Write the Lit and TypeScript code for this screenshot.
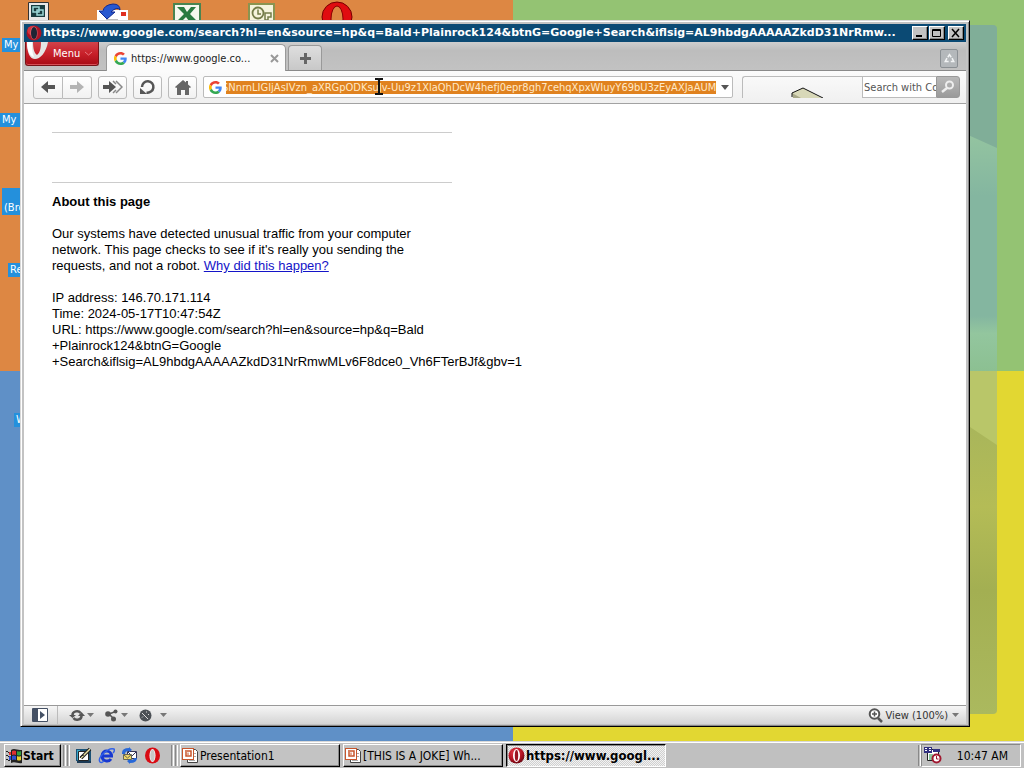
import { LitElement, html, svg, css } from "lit";
import { customElement, query } from "lit/decorators.js";

const googleG = html`<svg width="13" height="13" viewBox="0 0 48 48" aria-hidden="true">
  <path fill="#ea4335" d="M24 9.5c3.500 0 6.700 1.200 9.200 3.600l6.900-6.900C35.900 2.400 30.500 0 24 0 14.600 0 6.500 5.400 2.600 13.200l8 6.200C12.400 13.700 17.700 9.500 24 9.500z"/>
  <path fill="#4285f4" d="M47 24.500c0-1.600-.2-3.100-.4-4.500H24v9h12.900c-.6 3-2.300 5.500-4.800 7.200l7.700 6C44.400 38 47 31.800 47 24.500z"/>
  <path fill="#fbbc05" d="M10.500 28.600a14.500 14.500 0 0 1 0-9.200l-8-6.200a24 24 0 0 0 0 21.600z"/>
  <path fill="#34a853" d="M24 48c6.500 0 11.900-2.100 15.900-5.800l-7.700-6c-2.200 1.500-4.900 2.300-8.200 2.300-6.300 0-11.600-4.200-13.500-9.900l-8 6.200C6.500 42.600 14.600 48 24 48z"/>
</svg>`;

const operaBadge = html`<svg width="17" height="17" viewBox="0 0 17 17" aria-hidden="true">
  <defs><radialGradient id="ob" cx=".4" cy=".3" r=".8"><stop offset="0" stop-color="#e8404c"/><stop offset=".6" stop-color="#b01020"/><stop offset="1" stop-color="#50040c"/></radialGradient></defs>
  <circle cx="8.500" cy="8.500" r="8" fill="url(#ob)"/>
  <ellipse cx="8.500" cy="8.500" rx="3.500" ry="6.500" fill="#fff"/><ellipse cx="8.500" cy="8.500" rx="1.700" ry="5.500" fill="#9c1422"/>
</svg>`;

const operaTitle = html`<svg width="16" height="16" viewBox="0 0 17 17" aria-hidden="true">
  <circle cx="8.500" cy="8.500" r="8" fill="#a81424"/><circle cx="6.500" cy="6" r="5" fill="#d43440"/>
  <ellipse cx="8.500" cy="8.500" rx="4" ry="7" fill="#fff" opacity=".25"/><ellipse cx="8.500" cy="8.500" rx="3.200" ry="6.500" fill="#1c2434"/>
</svg>`;

const powerpoint = html`<svg width="17" height="17" viewBox="0 0 17 17" aria-hidden="true">
  <path fill="#fff" stroke="#444" d="M5.500 2.500h8l2 2v11h-10z"/><path stroke="#aaa" d="M12 6.500h2M12 9.500h2M7 13.500h6"/>
  <rect x=".5" y="1.500" width="11" height="11" fill="#fff" stroke="#c8562c"/>
  <path fill="none" stroke="#c8562c" stroke-width="1.500" d="M3 4h6v5H4V5"/><path fill="none" stroke="#c8562c" d="M6 5.500v2.500"/>
</svg>`;

const caret = html`<svg class="caret" width="7" height="4" viewBox="0 0 7 4" aria-hidden="true"><path fill="#777" d="M0 0h7L3.500 4z"/></svg>`;

const arrowLeft = svg`<path d="M1 7l7-6v4h7v4H8v4z"/>`;

@customElement("app-taskbar")
class AppTaskbar extends LitElement {
  static styles = css`
    :host { display: block; background: #c0c0c0; border-top: 1px solid #d8d8d8; font: 12px "DejaVu Sans Condensed", "DejaVu Sans", sans-serif; color: #000; }
    .bar { display: flex; align-items: center; height: 26px; padding: 1px 3px 1px 4px; box-sizing: border-box; border-top: 1px solid #fff; }
    button { font: inherit; color: inherit; background: #c3c3c3; padding: 0; margin: 0; border: 1px solid; border-color: #fff #000 #000 #fff; box-shadow: inset -1px -1px #888; height: 23px; display: flex; align-items: center; white-space: nowrap; overflow: hidden; box-sizing: border-box; border-radius: 0; }
    .start { width: 57px; font-weight: bold; padding-left: 1px; gap: 1px; flex: none; }
    .grip { width: 1px; height: 21px; border-left: 1px solid #888; border-right: 1px solid #fff; margin-left: 2px; flex: none; }
    .grip.second { margin-left: 1px; }
    .quick { display: flex; gap: 6px; padding: 0 8px 0 5px; }
    .quick button { border: 0; box-shadow: none; background: none; width: 17px; }
    .tasks { display: flex; gap: 3px; flex: 1; padding-left: 2px; min-width: 0; }
    .task { flex: 0 1 160px; padding-left: 1px; gap: 1px; min-width: 0; }
    .task span { overflow: hidden; }
    .task svg, .start svg { flex: none; }
    .task.active { font-size: 13px; font-weight: bold; background: repeating-conic-gradient(#d0d0d0 0 25%, #f2f2f2 0 50%) 0 0 / 2px 2px; border-color: #000 #fff #fff #000; box-shadow: inset 1px 1px #888; }
    .tray { display: flex; align-items: center; height: 23px; width: 100px; box-sizing: border-box; border: 1px solid; border-color: #888 #fff #fff #888; padding: 0 12px 0 2px; justify-content: space-between; }
  `;
  render() {
    return html`<nav class="bar" aria-label="Taskbar">
      <button class="start"><svg width="16" height="16" viewBox="0 0 16 16" aria-hidden="true">
        <path fill="#222" d="M0 3h2v1H0zm2 1h2v1H2zM0 7h2v1H0zm2 1h2v1H2zM0 11h2v1H0zm2 1h2v1H2zM5 2c3-2 6 0 9 0h2v13c-4 1-7-2-11 0z"/>
        <path fill="#e03030" d="M6 3q2-1 4 0v4q-2-1-4 0zM3 4h2v3H3z"/><path fill="#30a040" d="M11 3q2 1 4 0v4q-2 1-4 0z"/><path fill="#3050d0" d="M6 8q2-1 4 0v4q-2-1-4 0zM3 8h2v4H3z"/><path fill="#e8d030" d="M11 8q2 1 4 0v4q-2 1-4 0z"/>
      </svg>Start</button>
      <i class="grip"></i><i class="grip second"></i>
      <div class="quick">
        <button aria-label="Show Desktop"><svg width="17" height="17" viewBox="0 0 17 17"><path fill="#1b5276" d="M1 2h15v12H1z"/><path fill="#38a8c8" d="M2 3h3v10H2z"/><path fill="#fff" stroke="#222" d="M3.500 4.500h10v9h-10z"/><path stroke="#222" stroke-width="3.500" d="M6 11l9-9"/><path stroke="#e8e0a0" stroke-width="1.500" d="M6 11l9-9"/><path fill="none" stroke="#222" d="M5 11q1-3 4-3"/><path fill="#1b3a56" d="M2 14h14v2H2z"/></svg></button>
        <button aria-label="Internet Explorer"><svg width="17" height="17" viewBox="0 0 17 17"><path fill="none" stroke="#1838d0" stroke-width="3" d="M4 9h9.500c0-6-9-7-9.500 0 0 6 7 6 9 3"/><path fill="none" stroke="#3060e8" stroke-width="1.500" d="M2 15C-1 11 10 0 16 2c1 1 0 3-1 4M2 15c1 1 3 0 4-1"/></svg></button>
        <button aria-label="Outlook Express"><svg width="17" height="17" viewBox="0 0 17 17"><path fill="#fff" stroke="#335" d="M6.500 4.500h9v7h-9z"/><path fill="none" stroke="#335" d="M7 5l4 4 4-4"/><path fill="#f0d868" stroke="#665" d="M2.500 7.500h8v5h-8z"/><path fill="none" stroke="#665" d="M3 8l3.500 3L10 8"/><path fill="#2868d8" d="M1 6q0-5 7-5V0l3 3-3 2V4Q4 4 4 7H1zM16 11q0 5-7 5v1l-3-3 3-2v1q4 0 4-2z"/></svg></button>
        <button aria-label="Opera"><svg width="17" height="17" viewBox="0 0 17 17"><ellipse cx="8.500" cy="8.500" rx="7.500" ry="8" fill="#d80c14"/><ellipse cx="8.500" cy="8.500" rx="3" ry="6.500" fill="#fff"/><ellipse cx="8.500" cy="8.500" rx="2.300" ry="6" fill="#c8c8c8"/></svg></button>
      </div>
      <i class="grip"></i><i class="grip second"></i>
      <div class="tasks">
        <button class="task">${powerpoint}<span>Presentation1</span></button>
        <button class="task">${powerpoint}<span>[THIS IS A JOKE] Wh...</span></button>
        <button class="task active">${operaBadge}<span>https://www.googl...</span></button>
      </div>
      <i class="grip"></i>
      <div class="tray"><svg width="18" height="17" viewBox="0 0 18 17" aria-hidden="true"><path fill="#fff" stroke="#222" d="M3.500 2.500h11v11h-11z"/><path fill="#303080" d="M0 0h8v6H0zM9 2h7v3H9z"/><path stroke="#fff" d="M1 1.500h2M1 3.500h2M5 1.500h2M5 3.500h2"/><path fill="#8cc8a0" d="M5 7h4v6H5z"/><circle cx="12.500" cy="11.500" r="4" fill="#fff" stroke="#a01830" stroke-width="2"/><path fill="none" stroke="#a01830" d="M12.500 9v3h2"/></svg><time>10:47 AM</time></div>
    </nav>`;
  }
}

@customElement("app-browser")
class AppBrowser extends LitElement {
  @query(".url") url!: HTMLInputElement;

  static styles = css`
    :host { display: flex; flex-direction: column; box-sizing: border-box; background: #fff; border: 1px solid; border-color: #d8d8d8 #000 #000 #d8d8d8; box-shadow: inset 1px 1px #fff, inset -1px -1px #888, inset 0 0 0 3px #c3c3c3; padding: 3px 3px 2px; font: 11px "DejaVu Sans Condensed", "DejaVu Sans", sans-serif; color: #222; }
    button, input { font: inherit; color: inherit; margin: 0; padding: 0; box-sizing: border-box; }
    button { display: flex; align-items: center; justify-content: center; flex: none; }
    .title { display: flex; align-items: center; height: 18px; background: #0b4a74; color: #fff; padding: 0 2px; gap: 1px; flex: none; }
    .title h1 { font: bold 11px/18px "DejaVu Sans", sans-serif; margin: 0; flex: 1; white-space: nowrap; overflow: hidden; min-width: 0; }
    .title svg { flex: none; }
    .ctl { width: 16px; height: 14px; background: #c3c3c3; border: 1px solid; border-color: #fff #000 #000 #fff; box-shadow: inset -1px -1px #888; }
    .ctl.close { margin-left: 2px; }
    .tabs { display: flex; align-items: flex-end; height: 29px; background: linear-gradient(#cfcfcf, #bdbdbd 30%, #c2c2c2); border-bottom: 1px solid #8a8a8a; box-sizing: border-box; flex: none; }
    .menu { align-self: flex-start; height: 24px; width: 74px; margin-left: 1px; border: 1px solid #781418; border-top: 0; border-radius: 0 0 3px 3px; background: linear-gradient(#d0434a, #c8202a 50%, #a80c16); color: #fff; justify-content: flex-start; gap: 5px; font-size: 11px; box-shadow: inset 0 -1px #d85058; }
    .menu svg { align-self: flex-start; }
    .menu .chev { align-self: center; }
    .tab { display: flex; align-items: center; gap: 4px; width: 180px; height: 27px; margin: 0 0 -1px 7px; padding: 0 5px 0 7px; box-sizing: border-box; background: #fbfbfb; border: 1px solid #999; border-bottom: 0; border-radius: 5px 5px 0 0; flex: 0 1 auto; }
    .tab .name { flex: 1; white-space: nowrap; overflow: hidden; }
    .tab button { border: 0; background: none; width: 12px; height: 14px; }
    .new { width: 34px; height: 25px; margin-left: 2px; border: 1px solid #999; border-bottom: 0; border-radius: 4px 4px 0 0; background: linear-gradient(#dedede, #c8c8c8); }
    .trash { width: 18px; height: 19px; margin: 0 8px 2px auto; border: 1px solid #8b9094; background: #b4b8bb; border-radius: 2px; }
    .tools { display: flex; align-items: center; height: 33px; background: linear-gradient(#fbfbfb, #f0f0f0); border-bottom: 1px solid #a2a2a2; box-sizing: border-box; padding: 0 6px 0 9px; gap: 6px; flex: none; }
    .tools > button, .pair button { width: 29px; height: 23px; border: 1px solid #bbb; border-radius: 3px; background: linear-gradient(#fff, #f1f1f1); }
    .pair { display: flex; }
    .pair button:first-child { width: 30px; border-radius: 3px 0 0 3px; }
    .pair button:last-child { border-left: 0; border-radius: 0 3px 3px 0; }
    .address { position: relative; display: flex; align-items: center; flex: 1; height: 22px; border: 1px solid #bbb; border-radius: 2px; background: #fff; box-sizing: border-box; padding: 0 3px 0 5px; gap: 4px; min-width: 0; }
    .url { flex: 1; min-width: 0; height: 13px; border: 0; background: #e0821f; color: #ffe9c8; }
    .address button { border: 0; background: none; width: 8px; height: 18px; margin-left: 1px; }
    .beam { position: absolute; left: 170px; top: 1px; }
    .aside { display: flex; height: 22px; width: 218px; margin-left: 3px; flex: none; }
    .box { width: 120px; border: 1px solid #bbb; border-bottom: 0; border-right: 0; box-sizing: border-box; border-radius: 3px 0 0; display: flex; align-items: flex-end; justify-content: center; padding-left: 9px; flex: none; }
    .aside input { flex: 1; min-width: 0; border: 1px solid #bbb; border-right: 0; background: #fff; padding-left: 1px; color: #555; border-radius: 0; }
    .aside input::placeholder { color: #555; opacity: 1; }
    .go { width: 24px; border: 1px solid #999; border-radius: 0 3px 3px 0; background: linear-gradient(#b9b9b9, #9a9a9a); }
    main { flex: 1; min-height: 0; overflow: hidden; background: #fff; padding: 28px 28px 0; color: #000; font: 13px/16px "Liberation Sans", Arial, sans-serif; }
    .col { max-width: 400px; }
    hr { border: 0; border-top: 1px solid #ccc; margin: 0 0 49px; }
    hr.low { margin-bottom: 11px; }
    h2 { font-size: 13px; line-height: 16px; margin: 0 0 16px; }
    p { margin: 0 0 16px; white-space: nowrap; }
    a { color: #1414c8; }
    footer { display: flex; align-items: center; height: 19px; border-top: 1px solid #999; background: linear-gradient(#f6f6f6, #d4d4d4); box-sizing: border-box; padding: 0 7px; flex: none; }
    footer button { border: 0; background: none; gap: 2px; height: 18px; }
    .panelbtn { width: 17px; }
    .sep { width: 1px; height: 18px; background: #bbb; margin: 0 11px 0 9px; }
    .group { display: flex; gap: 11px; flex: 1; }
    .group button:last-child { gap: 8px; }
    .view { color: #333; }
    .view .caret { margin-left: 2px; }
  `;

  firstUpdated() {
    this.url.scrollLeft = this.url.scrollWidth;
  }

  render() {
    return html`
      <header class="title">${operaTitle}<h1>https://www.google.com/search?hl=en&source=hp&q=Bald+Plainrock124&btnG=Google+Search&iflsig=AL9hbdgAAAAAZkdD31NrRmw...</h1>
        <button class="ctl" aria-label="Minimize"><svg width="12" height="10"><path fill="#000" d="M2 7h6v2H2z"/></svg></button>
        <button class="ctl" aria-label="Maximize"><svg width="12" height="10"><path fill="none" stroke="#000" d="M1.500 1.500h8v7h-8zM1 2.500h9"/></svg></button>
        <button class="ctl close" aria-label="Close"><svg width="12" height="10"><path stroke="#000" stroke-width="1.500" d="M2 1l7 8M9 1L2 9"/></svg></button>
      </header>
      <div class="tabs">
        <button class="menu"><svg width="22" height="19" viewBox="0 0 22 19" aria-hidden="true"><path fill="#e4e4e4" d="M1 0c0 11 3 17 8 17S20 11 22 0h-7c0 6-1 11-4 13C8 11 7 6 7 0z"/><path fill="#fff" d="M1 0c0 9 3 14 7 15C6 11 6 5 6 0z"/></svg>Menu<svg class="chev" width="7" height="5" viewBox="0 0 7 5" aria-hidden="true"><path fill="none" stroke="#e87880" d="M0 1l3.500 3L7 1"/></svg></button>
        <div class="tab">${googleG}<span class="name">https://www.google.co...</span><button aria-label="Close tab"><svg width="9" height="9"><path stroke="#999" stroke-width="2" d="M1 1l7 7M8 1L1 8"/></svg></button></div>
        <button class="new" aria-label="New tab"><svg width="13" height="13"><path fill="#666" d="M5 1h3v4h4v3H8v4H5V8H1V5h4z"/></svg></button>
        <button class="trash" aria-label="Closed tabs"><svg width="11" height="11" viewBox="0 0 13 13"><path fill="none" stroke="#f2f4f5" stroke-width="1.800" d="M4.500 5L6.500 2l2 3M9.500 6l2 4H8M5.500 10h-4l2-4"/></svg></button>
      </div>
      <div class="tools">
        <div class="pair">
          <button aria-label="Back"><svg width="16" height="14" fill="#555">${arrowLeft}</svg></button>
          <button aria-label="Forward"><svg width="16" height="14" viewBox="0 0 16 14"><path fill="#b4b4b4" d="M15 7L8 1v4H1v4h7v4z"/></svg></button>
        </div>
        <button aria-label="Fast forward"><svg width="21" height="14" viewBox="0 0 21 14"><path fill="#555" d="M14 7L7 1v4H1v4h6v4z"/><path fill="none" stroke="#888" stroke-width="1.500" d="M11 1l3 3M14 1l6 6-6 6M11 13l3-3"/></svg></button>
        <button aria-label="Reload"><svg width="17" height="17" viewBox="0 0 17 17"><path fill="none" stroke="#555" stroke-width="2.500" d="M3 8a5.700 5.700 0 1 1 4.500 5.500"/><path fill="#555" d="M1 15V9l7 6z"/></svg></button>
        <button aria-label="Home"><svg width="16" height="15" viewBox="0 0 16 15"><path fill="#666" d="M8 0L0 7l1 1 1-.5V15h4v-5h4v5h4V7.500l1 .5 1-1-3-2.600V1h-2v1.600z"/></svg></button>
        <div class="address">${googleG}<input class="url" aria-label="Address" .value=${"SNnrnLIGIjAsIVzn_aXRGpODKsuJv-Uu9z1XlaQhDcW4hefj0epr8gh7cehqXpxWIuyY69bU3zEyAXJaAUM"}><button aria-label="Show addresses"><svg width="8" height="5"><path fill="#555" d="M0 0h8L4 5z"/></svg></button>
          <svg class="beam" width="10" height="17" viewBox="0 0 10 17" aria-hidden="true"><path fill="none" stroke="#111" stroke-width="2" d="M1 1h3l1 1 1-1h3M5 2v13M1 16h3l1-1 1 1h3"/></svg></div>
        <div class="aside">
          <div class="box"><svg width="33" height="11" viewBox="0 0 33 11" aria-hidden="true"><path fill="#d8d8b8" d="M1 6l11-5 19 10H3z"/><path fill="#a8a888" d="M1 6l9 5H2z"/><path fill="none" stroke="#111" d="M1 10V6l11-5 20 10"/></svg></div>
          <input aria-label="Search" placeholder="Search with Co"><button class="go" aria-label="Go"><svg width="16" height="14" viewBox="0 0 16 14"><circle cx="9.500" cy="5" r="3.500" fill="none" stroke="#eee" stroke-width="2"/><path stroke="#eee" stroke-width="2.500" d="M7 8l-5 4"/></svg></button>
        </div>
      </div>
      <main><div class="col">
        <hr><hr class="low">
        <h2>About this page</h2>
        <p>Our systems have detected unusual traffic from your computer<br>network. This page checks to see if it's really you sending the<br>requests, and not a robot. <a href="#why">Why did this happen?</a></p>
        <p>IP address: 146.70.171.114<br>Time: 2024-05-17T10:47:54Z<br>URL: https://www.google.com/search?hl=en&source=hp&q=Bald<br>+Plainrock124&btnG=Google<br>+Search&iflsig=AL9hbdgAAAAAZkdD31NrRmwMLv6F8dce0_Vh6FTerBJf&gbv=1</p>
      </div></main>
      <footer>
        <button class="panelbtn" aria-label="Panels"><svg width="16" height="14" viewBox="0 0 16 14"><path fill="#fff" stroke="#445064" d="M.5.5h15v13H.5z"/><path fill="#445064" d="M1 1h5v12H1zM8 3v8l5-4z"/></svg></button>
        <i class="sep"></i>
        <div class="group">
          <button aria-label="Synchronize"><svg width="16" height="13" viewBox="0 0 16 13"><path fill="none" stroke="#555" stroke-width="2.500" d="M3.500 6c0-4 6-5 8-2M12.500 7c0 4-6 5-8 2"/><path fill="#555" d="M0 6h7L3.500 9zM9 7h7l-3.500-4z"/></svg>${caret}</button>
          <button aria-label="Unite"><svg width="14" height="13" viewBox="0 0 14 13"><path fill="none" stroke="#555" stroke-width="1.500" d="M10.500 2.500L4 5l5 5"/><circle cx="3" cy="5" r="2.800" fill="#555"/><circle cx="10.500" cy="2.500" r="2" fill="#555"/><circle cx="8.500" cy="10" r="2.500" fill="#555"/></svg>${caret}</button>
          <button aria-label="Turbo"><svg width="13" height="13" viewBox="0 0 13 13"><circle cx="6.500" cy="6.500" r="6" fill="#4b5055"/><path fill="none" stroke="#ddd" d="M3 4l6 6M3 8.500l1-1M7 3h1M9 5l1 1"/></svg>${caret}</button>
        </div>
        <button class="view"><svg width="15" height="15" viewBox="0 0 15 15" aria-hidden="true"><circle cx="6.500" cy="6" r="4.800" fill="#fff" stroke="#555" stroke-width="2"/><path stroke="#555" stroke-width="2.500" d="M10 10l4 4"/><path stroke="#555" stroke-width="1.500" d="M4 6h5M6.500 3.500v5"/></svg>View (100%)${caret}</button>
      </footer>`;
  }
}

@customElement("app-root")
class AppRoot extends LitElement {
  static styles = css`
    :host { display: flex; flex-direction: column; height: 100vh; overflow: hidden; }
    .desktop { position: relative; flex: 1; min-height: 0; overflow: hidden; display: grid; grid-template: 371fr 370fr / 513fr 511fr; font: 11px/14px "DejaVu Sans Condensed", "DejaVu Sans", sans-serif; color: #fff; }
    .q1 { background: #dd8743; } .q2 { background: #94c373; } .q3 { background: #5f90c7; } .q4 { background: #e2d732; }
    .glass { position: absolute; right: 27px; top: 25px; bottom: 27px; width: 60px; border-radius: 4px; overflow: hidden; }
    .glass svg { display: block; width: 100%; height: 100%; }
    .shortcut { position: absolute; }
    .label { position: absolute; background: #2490dc; padding: 0 2px; white-space: nowrap; }
    .l1 { left: 2px; top: 38px; } .l2 { left: 0; top: 113px; } .l3 { left: 2px; top: 188px; padding-top: 13px; } .l4 { left: 8px; top: 263px; } .l5 { left: 14px; top: 413px; }
    .i1 { left: 28px; top: 2px; } .i2 { left: 96px; top: 2px; } .i3 { left: 173px; top: 3px; } .i4 { left: 248px; top: 3px; } .i5 { left: 321px; top: 1px; }
    app-browser { position: absolute; left: 20px; top: 20px; right: 54px; bottom: 14px; }
    app-taskbar { flex: none; }
  `;
  render() {
    return html`
      <div class="desktop">
        <div class="q1"></div><div class="q2"></div><div class="q3"></div><div class="q4"></div>
        <div class="glass"><svg viewBox="0 0 60 689" preserveAspectRatio="none" aria-hidden="true">
          <defs>
            <linearGradient id="up" x2="0" y2="1"><stop offset="0" stop-color="#97c7a0"/><stop offset=".3" stop-color="#84b6a0"/><stop offset=".78" stop-color="#84b6a0"/><stop offset=".85" stop-color="#93c69e"/><stop offset="1" stop-color="#8cc092"/></linearGradient>
            <linearGradient id="low" x2="0" y2="1"><stop offset="0" stop-color="#a6b45c"/><stop offset=".33" stop-color="#b4bc56"/><stop offset=".6" stop-color="#a3af52"/><stop offset="1" stop-color="#abb95e"/></linearGradient>
          </defs>
          <path fill="#80ae98" d="M0 0h60v130H0z"/><path fill="url(#up)" d="M0 96l60 27v223H0z"/>
          <path fill="#b9c669" d="M0 346h60v80H0z"/><path fill="url(#low)" d="M0 380l60 40v269H0z"/>
        </svg></div>
        <span class="label l1">My</span><span class="label l2">My D</span><span class="label l3">(Bro</span><span class="label l4">Re</span><span class="label l5">W</span>
        <svg class="shortcut i1" width="22" height="20"><path fill="#e8e8e8" stroke="#333" d="M.500.500h20v19H.500z"/><path fill="#183c40" d="M3 3h14v12H3z"/><path fill="none" stroke="#9cd8d8" stroke-width="1.500" d="M5 5h6v5H5zM9 8h6v5H9z"/></svg>
        <svg class="shortcut i2" width="34" height="20"><path fill="#fff" d="M1 8h31v12H1z"/><path fill="#e03020" d="M25 10h5v4h-5z"/><path stroke="#777" d="M10 18h12"/><path fill="#2858d0" stroke="#102890" d="M3 9h4Q8 3 17 2q7 0 7 6-3-4-9 2h4l-8 7z"/></svg>
        <svg class="shortcut i3" width="28" height="18"><path fill="#f6f8ee" stroke="#4a8450" stroke-width="2" d="M1 1h26v18H1z"/><path fill="#2b7b40" d="M4 4h7l3 5 4-5h5l-6 7 7 7h-8l-3-4-4 4H4l7-7z"/></svg>
        <svg class="shortcut i4" width="28" height="18"><path fill="#f6f4dc" stroke="#8a9450" stroke-width="2" d="M1 1h25v18H1z"/><circle cx="10" cy="10" r="5.500" fill="none" stroke="#747c48" stroke-width="1.800"/><path fill="none" stroke="#747c48" stroke-width="1.500" d="M10 6.500V11h3M17 10h6v4h-3v3h-3z"/></svg>
        <svg class="shortcut i5" width="32" height="24"><ellipse cx="16" cy="16" rx="15" ry="15" fill="#e00c10" stroke="#700"/><ellipse cx="16" cy="18" rx="6" ry="13" fill="#dd8743" stroke="#800"/></svg>
        <app-browser></app-browser>
      </div>
      <app-taskbar></app-taskbar>`;
  }
}
